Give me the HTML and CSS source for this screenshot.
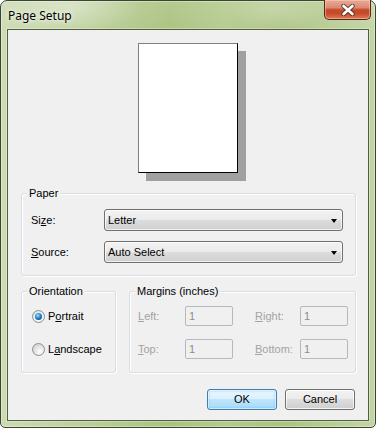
FILE: index.html
```html
<!DOCTYPE html>
<html>
<head>
<meta charset="utf-8">
<link rel="stylesheet" href="styles.css">
</head>
<body>
<div class="window">
  <div class="titlebar">
    <span class="title">Page Setup</span>
    <div class="close">
      <svg width="14" height="12" viewBox="0 0 14 12">
        <path d="M2.5 2 L11.5 10 M11.5 2 L2.5 10" stroke="#3a2a28" stroke-width="4.4" stroke-linecap="round" fill="none" opacity="0.75"/>
        <path d="M2.5 2 L11.5 10 M11.5 2 L2.5 10" stroke="#ffffff" stroke-width="2.6" stroke-linecap="round" fill="none"/>
      </svg>
    </div>
  </div>
  <div class="client">
    <div class="preview"><div class="page"></div></div>

    <div class="group paper">
      <div class="group-title">Paper</div>
      <div class="paper-grid">
        <span class="lbl">Si<u>z</u>e:</span>
        <div class="combo"><span>Letter</span><i class="arrow"></i></div>
        <span class="lbl"><u>S</u>ource:</span>
        <div class="combo"><span>Auto Select</span><i class="arrow"></i></div>
      </div>
    </div>

    <div class="lower">
      <div class="group orient">
        <div class="group-title">Orientation</div>
        <div class="radios">
          <div class="radio-row"><span class="radio checked"></span><span>P<u>o</u>rtrait</span></div>
          <div class="radio-row"><span class="radio"></span><span>L<u>a</u>ndscape</span></div>
        </div>
      </div>
      <div class="group margins">
        <div class="group-title">Margins (inches)</div>
        <div class="margin-grid">
          <span class="dis"><u>L</u>eft:</span><span class="field">1</span>
          <span class="spacer"></span>
          <span class="dis"><u>R</u>ight:</span><span class="field">1</span>
          <span class="dis"><u>T</u>op:</span><span class="field">1</span>
          <span class="spacer"></span>
          <span class="dis"><u>B</u>ottom:</span><span class="field">1</span>
        </div>
      </div>
    </div>

    <div class="buttons">
      <div class="btn default">OK</div>
      <div class="btn">Cancel</div>
    </div>
  </div>
</div>
</body>
</html>
```

FILE: styles.css
```css
html, body {
  margin: 0;
  padding: 0;
  background: #ffffff;
}

body {
  width: 376px;
  height: 428px;
  font-family: "Liberation Sans", Arial, sans-serif;
  font-size: 11px;
  color: #000;
}

.window {
  box-sizing: border-box;
  width: 376px;
  height: 428px;
  border: 1px solid #3b4632;
  border-radius: 7px 7px 5px 5px;
  padding: 0 6px 6px 6px;
  display: flex;
  flex-direction: column;
  background:
    radial-gradient(ellipse 70px 26px at 70px 6px, rgba(255,255,255,0.35), rgba(255,255,255,0)),
    radial-gradient(ellipse 50px 22px at 275px 8px, rgba(255,255,255,0.25), rgba(255,255,255,0)),
    linear-gradient(180deg, rgba(255,255,255,0.12) 0%, rgba(255,255,255,0) 10%, rgba(0,0,0,0) 100%),
    linear-gradient(90deg, #cddbb4 0%, #bccf9b 22%, #aac27f 45%, #b4ca8e 60%, #abc281 75%, #c3d5a5 100%);
  box-shadow: inset 0 0 0 1px rgba(255,255,255,0.35);
}

.titlebar {
  height: 28px;
  display: flex;
  align-items: flex-start;
  justify-content: space-between;
  flex: none;
}

.title {
  font-family: "Noto Sans", "Open Sans", sans-serif;
  font-size: 12px;
  line-height: 16px;
  margin-top: 7px;
  padding-left: 1px;
  color: #000;
  text-shadow: 0 0 6px rgba(255,255,255,0.9), 0 0 3px rgba(255,255,255,0.7);
}

.close {
  box-sizing: border-box;
  width: 47px;
  height: 20px;
  margin-top: -1px;
  margin-right: -2px;
  border: 1px solid #5a2619;
  border-top: none;
  border-radius: 0 0 5px 5px;
  display: flex;
  align-items: center;
  justify-content: center;
  background: linear-gradient(180deg, #e9ab98 0%, #dc8a72 40%, #c64a2a 52%, #c54a2a 70%, #de7a56 100%);
  box-shadow: inset 0 0 0 1px rgba(255,220,200,0.45);
}

.close svg {
  display: block;
  margin-top: 1px;
}

.client {
  box-sizing: border-box;
  flex: 1;
  background: #f0f0f0;
  border: 1px solid #51603f;
  box-shadow: 0 0 0 1px rgba(255,255,255,0.3);
  padding: 13px 12px 0 13px;
  display: flex;
  flex-direction: column;
}

.preview {
  display: flex;
  justify-content: center;
  margin-left: -1px;
}

.page {
  box-sizing: border-box;
  width: 100px;
  height: 130px;
  background: #fff;
  border-top: 1px solid #808080;
  border-left: 1px solid #808080;
  border-right: 1px solid #000;
  border-bottom: 1px solid #000;
  box-shadow: 8px 8px 0 #a0a0a0;
}

.group {
  box-sizing: border-box;
  border: 1px solid #d5dfe5;
  border-radius: 3px;
  box-shadow: inset 1px 1px 0 #fff, 1px 1px 0 #fff;
}

.group-title {
  margin-top: -7px;
  margin-left: 5px;
  padding: 0 2px;
  width: max-content;
  background: #f0f0f0;
  line-height: 13px;
  height: 13px;
}

.paper {
  margin-top: 20px;
}

.paper-grid {
  margin: 9px 11px 12px 9px;
  display: grid;
  grid-template-columns: 73px 1fr;
  row-gap: 10px;
  align-items: center;
}

.lbl {
  line-height: 13px;
}

.combo {
  box-sizing: border-box;
  height: 22px;
  border: 1px solid #707070;
  border-radius: 3px;
  background: linear-gradient(180deg, #f2f2f2 0%, #ebebeb 50%, #dddddd 50%, #cfcfcf 100%);
  box-shadow: inset 0 0 0 1px rgba(255,255,255,0.7);
  display: flex;
  align-items: center;
  justify-content: space-between;
  padding: 0 5px 0 3px;
  margin-right: 1px;
}

.combo span {
  line-height: 13px;
}

.arrow {
  width: 0;
  height: 0;
  border-left: 3.5px solid transparent;
  border-right: 3.5px solid transparent;
  border-top: 4px solid #000;
  margin-top: 1px;
}

.lower {
  margin-top: 15px;
  display: flex;
  gap: 13px;
}

.orient {
  width: 95px;
}

.radios {
  margin: 8px 0 13px 10px;
  display: flex;
  flex-direction: column;
  gap: 13px;
}

.radio-row {
  height: 20px;
  display: flex;
  align-items: center;
  gap: 3px;
  line-height: 13px;
}

.radio {
  box-sizing: border-box;
  width: 13px;
  height: 13px;
  border-radius: 50%;
  border: 1px solid #8e8f8f;
  background: radial-gradient(circle at 65% 70%, #ffffff 0%, #e8e8e8 40%, #c8c8c8 100%);
  flex: none;
  display: flex;
  align-items: center;
  justify-content: center;
}

.radio.checked {
  background: radial-gradient(circle at 60% 65%, #ffffff 0%, #f0f0f0 50%, #cfcfcf 100%);
}

.radio.checked::after {
  content: "";
  width: 7px;
  height: 7px;
  border-radius: 50%;
  background: radial-gradient(circle at 40% 35%, #9fe0ff 0%, #3a9ad8 35%, #0d5aa6 70%, #093f7a 100%);
}

.margins {
  flex: 1;
}

.margin-grid {
  margin: 8px 7px 13px 8px;
  display: grid;
  grid-template-columns: 47px 48px 22px 45px 48px;
  grid-template-rows: 20px 20px;
  row-gap: 13px;
  align-items: center;
}

.dis {
  color: #a3a3a3;
  line-height: 13px;
}

.field {
  box-sizing: border-box;
  height: 20px;
  border: 1px solid #b5b9bc;
  border-radius: 2px;
  color: #8d8d8d;
  padding: 0 3px;
  line-height: 18px;
  background: #f0f0f0;
}

.buttons {
  margin-top: 16px;
  margin-right: 1px;
  display: flex;
  justify-content: flex-end;
  gap: 8px;
}

.btn {
  box-sizing: border-box;
  width: 70px;
  height: 21px;
  border: 1px solid #707070;
  border-radius: 3px;
  background: linear-gradient(180deg, #f2f2f2 0%, #ebebeb 50%, #dddddd 50%, #cfcfcf 100%);
  box-shadow: inset 0 0 0 1px rgba(255,255,255,0.75);
  display: flex;
  align-items: center;
  justify-content: center;
  line-height: 13px;
}

.btn.default {
  border-color: #3c7fb1;
  background: linear-gradient(180deg, #eaf6fd 0%, #d9f0fc 50%, #bee6fd 50%, #a7d9f5 100%);
  box-shadow: inset 0 0 0 1px rgba(255,255,255,0.6), inset 0 0 2px 1px rgba(80,180,240,0.5);
}
```
